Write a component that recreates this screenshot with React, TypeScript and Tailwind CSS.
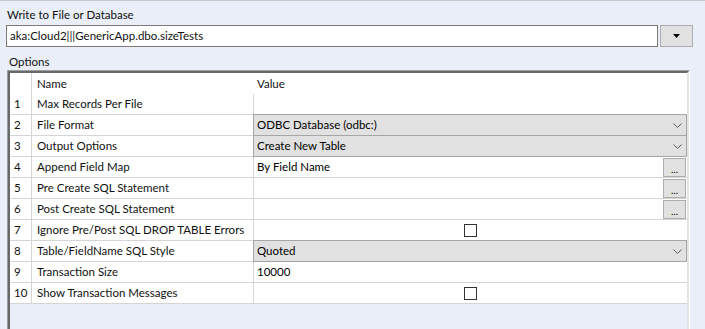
const font = { fontFamily: 'Lato, "Liberation Sans", Arial, sans-serif' };

type Row = {
  name: string;
  kind: 'text' | 'combo' | 'button' | 'check';
  value?: string;
};

const rows: Row[] = [
  { name: 'Max Records Per File', kind: 'text', value: '' },
  { name: 'File Format', kind: 'combo', value: 'ODBC Database (odbc:)' },
  { name: 'Output Options', kind: 'combo', value: 'Create New Table' },
  { name: 'Append Field Map', kind: 'button', value: 'By Field Name' },
  { name: 'Pre Create SQL Statement', kind: 'button', value: '' },
  { name: 'Post Create SQL Statement', kind: 'button', value: '' },
  { name: 'Ignore Pre/Post SQL DROP TABLE Errors', kind: 'check' },
  { name: 'Table/FieldName SQL Style', kind: 'combo', value: 'Quoted' },
  { name: 'Transaction Size', kind: 'text', value: '10000' },
  { name: 'Show Transaction Messages', kind: 'check' },
];

function Chevron() {
  return (
    <svg width="9" height="5" viewBox="0 0 9 5" className="absolute right-[4px] top-[8px]">
      <path d="M0.5 0.5 L4.5 4.5 L8.5 0.5" fill="none" stroke="#5a5a5a" strokeWidth="1" />
    </svg>
  );
}

function ValueCell({ row }: { row: Row }) {
  if (row.kind === 'combo') {
    return (
      <div className="relative -mt-px -ml-px h-[22px] flex-1 border border-[#a6a6a6] bg-[#e1e1e1] pl-[3px] leading-[20px] text-black">
        {row.value}
        <Chevron />
      </div>
    );
  }
  if (row.kind === 'check') {
    return (
      <div className="flex flex-1 items-center justify-center">
        <div className="h-[13px] w-[13px] border border-[#333333] bg-white" />
      </div>
    );
  }
  return (
    <div className="flex flex-1 items-start">
      <div className="flex-1 pl-[3px] leading-[20px] text-black">{row.value}</div>
      {row.kind === 'button' && (
        <div className="mr-[1px] mt-[1px] flex h-[19px] w-[23px] items-end justify-center border border-[#adadad] bg-[#e1e1e1] pb-[2px] text-[10px] leading-[10px] text-black">
          ...
        </div>
      )}
    </div>
  );
}

export default function App() {
  return (
    <div
      className="h-[329px] w-[705px] overflow-hidden whitespace-nowrap border-t border-[#c8c8c8] bg-[#e9eef8] text-[11.5px] text-[#111111]"
      style={font}
    >
      <div className="pl-[7px] pt-[6px] leading-[16px]">Write to File or Database</div>
      <div className="ml-[6px] mt-[2px] flex gap-[2px]">
        <div className="h-[22px] w-[652px] border border-[#7a7a7a] bg-white pl-[3px] leading-[20px]">
          aka:Cloud2|||GenericApp.dbo.sizeTests
        </div>
        <div className="flex h-[22px] w-[33px] items-center justify-center border border-[#adadad] bg-[#e1e1e1]">
          <svg width="7" height="4" viewBox="0 0 7 4">
            <path d="M0 0 H7 L3.5 4 Z" fill="#000" />
          </svg>
        </div>
      </div>
      <div className="pl-[9px] pt-[7px] leading-[16px]">Options</div>
      <div className="ml-[7px] h-[300px] w-[683px] border-2 border-l-[#a0a0a0] border-t-[#a0a0a0] border-r-white border-b-white">
        <div className="-m-[1px] h-full border-2 border-l-[#696969] border-t-[#696969] border-r-[#e3e3e3] border-b-[#e3e3e3]">
          <div className="flex h-[21px] bg-white leading-[21px]">
            <div className="w-[22px] border-r border-[#d5d5d5]" />
            <div className="w-[222px] border-r border-white pl-[5px]">Name</div>
            <div className="flex-1 pl-[3px]">Value</div>
          </div>
          {rows.map((row, i) => (
            <div key={row.name} className="flex h-[21px] border-b border-[#d5d5d5] bg-white">
              <div className="w-[22px] border-r border-[#d5d5d5] pl-[4px] leading-[20px]">{i + 1}</div>
              <div className="w-[222px] border-r border-[#d5d5d5] pl-[5px] leading-[20px]">{row.name}</div>
              <ValueCell row={row} />
            </div>
          ))}
        </div>
      </div>
    </div>
  );
}
